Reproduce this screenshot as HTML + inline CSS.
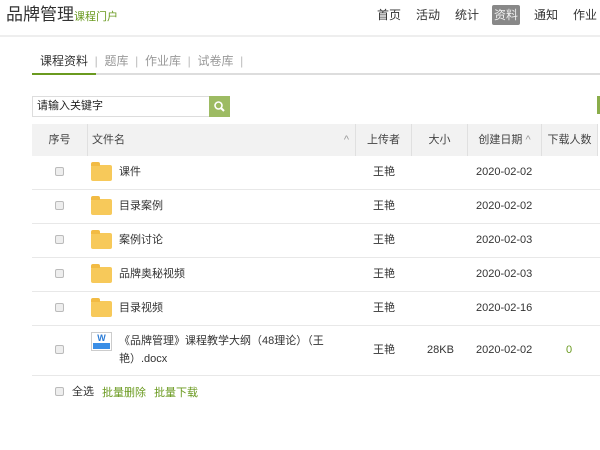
<!DOCTYPE html>
<html><head><meta charset="utf-8"><style>
*{margin:0;padding:0;box-sizing:border-box}
body{width:600px;height:450px;overflow:hidden;background:#fff;font-family:"Liberation Sans","Noto Sans CJK SC",sans-serif;font-size:11px;color:#333;position:relative}
.a{position:absolute;white-space:nowrap;line-height:14px}
.nav span{position:absolute;top:7px;font-size:12px;color:#333;line-height:16px}
.th{position:absolute;top:124px;height:32px;background:#f2f2f2;border-right:1px solid #e0e0e0;line-height:32px;text-align:center;color:#444}
.row{position:absolute;left:32px;width:568px;border-bottom:1px solid #e8e8e8}
.cb{position:absolute;left:55px;width:9px;height:9px;border:1px solid #bbb;background:#eee;border-radius:2px}
.fold{position:absolute;left:91px;width:21px;height:16px;background:#f7c95a;border-radius:2px}
.fold:before{content:"";position:absolute;left:0;top:-3px;width:9px;height:4px;background:#f2bb44;border-radius:2px 2px 0 0}
</style></head><body>
<div class="a" style="left:6px;top:5px;font-size:17px;line-height:20px;color:#333">品牌管理<span style="font-size:11px;color:#6a9a1f">课程门户</span></div>
<div class="nav">
<span style="left:377px">首页</span><span style="left:416px">活动</span><span style="left:455px">统计</span>
<span style="left:492px;top:5px;background:#888;color:#eee;padding:2px 2px;border-radius:2px">资料</span>
<span style="left:534px">通知</span><span style="left:573px">作业</span></div>
<div class="a" style="left:0;top:35px;width:600px;height:2px;background:#eee"></div>
<div class="a" style="left:40px;top:53px;font-size:12px;line-height:16px;color:#333">课程资料 <span style="color:#bbb">&nbsp;|&nbsp;</span> <span style="color:#999">题库</span> <span style="color:#bbb">&nbsp;|&nbsp;</span> <span style="color:#999">作业库</span> <span style="color:#bbb">&nbsp;|&nbsp;</span> <span style="color:#999">试卷库</span> <span style="color:#bbb">&nbsp;|</span></div>
<div class="a" style="left:32px;top:73px;width:568px;height:2px;background:#ddd"></div>
<div class="a" style="left:32px;top:73px;width:64px;height:2px;background:#6a9a1f"></div>
<div class="a" style="left:32px;top:96px;width:178px;height:21px;border:1px solid #ddd;line-height:19px;padding-left:4px;font-size:11px;color:#222">请输入关键字</div>
<div class="a" style="left:209px;top:96px;width:21px;height:21px;background:#9dbb63">
<svg width="21" height="21"><circle cx="9.5" cy="9.5" r="3.5" stroke="#fff" stroke-width="1.6" fill="none"/><line x1="12" y1="12" x2="15" y2="15" stroke="#fff" stroke-width="2"/></svg></div>
<div class="a" style="left:597px;top:96px;width:3px;height:18px;background:#8aad4a"></div>
<div class="th" style="left:32px;width:56px">序号</div>
<div class="th" style="left:88px;width:268px;text-align:left;padding-left:4px">文件名<span style="position:absolute;right:6px;color:#999">^</span></div>
<div class="th" style="left:356px;width:56px">上传者</div>
<div class="th" style="left:412px;width:56px">大小</div>
<div class="th" style="left:468px;width:74px">创建日期 <span style="color:#999">^</span></div>
<div class="th" style="left:542px;width:56px">下载人数</div>
<div class="row" style="top:156px;height:34px"></div>
<div class="row" style="top:190px;height:34px"></div>
<div class="row" style="top:224px;height:34px"></div>
<div class="row" style="top:258px;height:34px"></div>
<div class="row" style="top:292px;height:34px"></div>
<div class="row" style="top:326px;height:50px"></div>
<div class="cb" style="top:167px"></div><div class="fold" style="top:165px"></div><div class="a" style="left:119px;top:165px">课件</div><div class="a" style="left:373px;top:165px">王艳</div><div class="a" style="left:476px;top:165px">2020-02-02</div>
<div class="cb" style="top:201px"></div><div class="fold" style="top:199px"></div><div class="a" style="left:119px;top:199px">目录案例</div><div class="a" style="left:373px;top:199px">王艳</div><div class="a" style="left:476px;top:199px">2020-02-02</div>
<div class="cb" style="top:235px"></div><div class="fold" style="top:233px"></div><div class="a" style="left:119px;top:233px">案例讨论</div><div class="a" style="left:373px;top:233px">王艳</div><div class="a" style="left:476px;top:233px">2020-02-03</div>
<div class="cb" style="top:269px"></div><div class="fold" style="top:267px"></div><div class="a" style="left:119px;top:267px">品牌奥秘视频</div><div class="a" style="left:373px;top:267px">王艳</div><div class="a" style="left:476px;top:267px">2020-02-03</div>
<div class="cb" style="top:303px"></div><div class="fold" style="top:301px"></div><div class="a" style="left:119px;top:301px">目录视频</div><div class="a" style="left:373px;top:301px">王艳</div><div class="a" style="left:476px;top:301px">2020-02-16</div>
<div class="cb" style="top:345px"></div>
<div class="a" style="left:91px;top:332px;width:21px;height:19px;background:#fff;border:1px solid #ccc"><div style="color:#2a7bd6;font-weight:bold;font-size:9px;text-align:center;line-height:10px">W</div><div style="background:#3a8ee6;height:6px;margin:0 1px"></div></div>
<div class="a" style="left:119px;top:332px;line-height:18px;white-space:normal;width:215px">《品牌管理》课程教学大纲（48理论）（王艳）.docx</div>
<div class="a" style="left:373px;top:343px">王艳</div><div class="a" style="left:427px;top:343px">28KB</div><div class="a" style="left:476px;top:343px">2020-02-02</div><div class="a" style="left:566px;top:343px;color:#6a9a1f">0</div>
<div class="cb" style="top:387px"></div>
<div class="a" style="left:72px;top:385px">全选</div>
<div class="a" style="left:102px;top:386px;color:#6a9a1f">批量删除</div>
<div class="a" style="left:154px;top:386px;color:#6a9a1f">批量下载</div>
</body></html>
